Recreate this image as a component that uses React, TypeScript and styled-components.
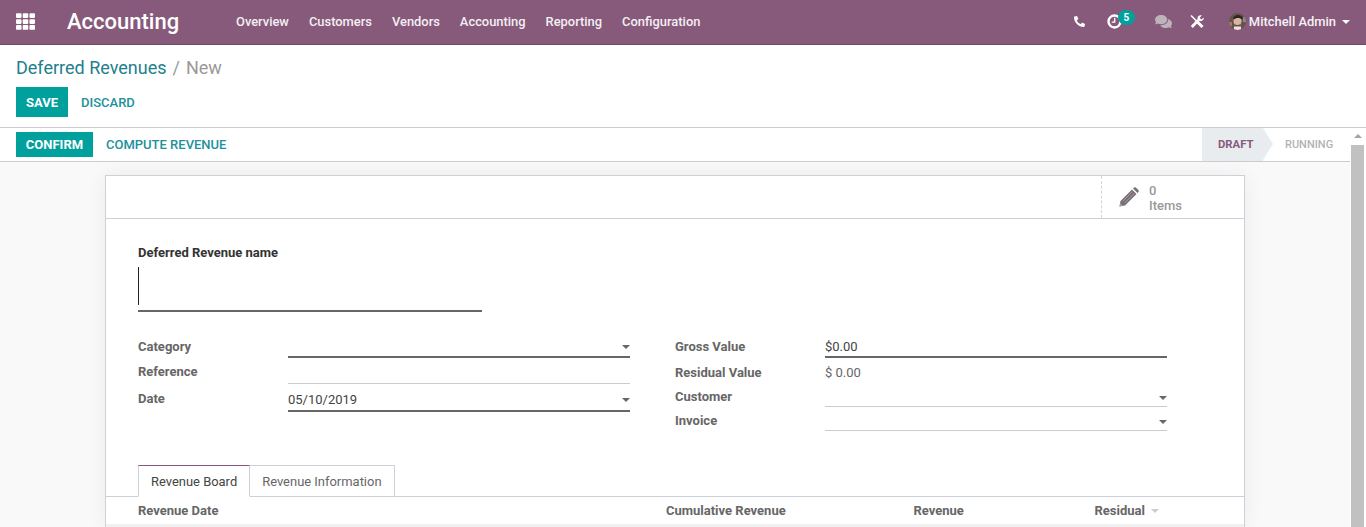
import React from "react";
import styled, { createGlobalStyle } from "styled-components";
import { FaPhone, FaComments, FaTh } from "react-icons/fa";

const GlobalStyle = createGlobalStyle`
  html, body {
    margin: 0;
    height: 100%;
    overflow: hidden;
    font-family: Roboto, "Noto Sans", sans-serif;
    font-size: 13px;
    color: #666;
    background: #fff;
  }
  * { box-sizing: border-box; }
`;

const Page = styled.div`
  display: flex;
  flex-direction: column;
  height: 527px;
  overflow: hidden;
`;

const NavBar = styled.header`
  display: flex;
  align-items: center;
  flex: none;
  height: 45px;
  padding: 0 16px 1px 16px;
  background: #875a7b;
  border-bottom: 1px solid #6f4a66;
  color: #fff;
`;

const Apps = styled.span`
  display: flex;
  font-size: 19px;
  width: 51px;
`;

const Brand = styled.span`
  font-size: 22px;
  font-weight: 500;
  width: 169px;
  white-space: nowrap;
`;

const Menu = styled.nav`
  display: flex;
  gap: 20px;
  font-size: 12.9px;
  font-weight: 500;
  flex: 1;
  color: #f4eef2;
`;

const Systray = styled.div`
  display: flex;
  align-items: center;
`;

const TrayIcon = styled.span<{ $w: number; $muted?: boolean; $inset?: number }>`
  position: relative;
  display: flex;
  width: ${({ $w }) => $w}px;
  padding-left: ${({ $inset = 0 }) => $inset}px;
  color: ${({ $muted }) => ($muted ? "#bdb3ba" : "#fff")};
  font-size: 15px;
`;

const Badge = styled.span`
  position: absolute;
  left: 11px;
  top: -4px;
  width: 17px;
  height: 15px;
  border-radius: 8px;
  background: #00a09d;
  color: #fff;
  font-size: 10px;
  font-weight: 700;
  line-height: 15px;
  text-align: center;
`;

const User = styled.span`
  display: flex;
  align-items: center;
  gap: 3px;
  font-size: 12.93px;
  font-weight: 500;
  color: #f6f1f4;
`;

const Caret = styled.span<{ $color?: string; $size?: number; $lift?: number; $gap?: number }>`
  display: inline-block;
  width: 0;
  height: 0;
  margin-bottom: ${({ $lift = 0 }) => $lift}px;
  margin-left: ${({ $gap = 0 }) => $gap}px;
  border-left: ${({ $size = 4 }) => $size}px solid transparent;
  border-right: ${({ $size = 4 }) => $size}px solid transparent;
  border-top: ${({ $size = 4 }) => $size}px solid ${({ $color = "#666" }) => $color};
`;

const ControlPanel = styled.section`
  flex: none;
  height: 83px;
  padding: 11px 16px 0;
  border-bottom: 1px solid #ccc;
`;

const Breadcrumb = styled.div`
  display: flex;
  gap: 6px;
  height: 31px;
  font-size: 18px;
  line-height: 24px;
  color: #999;
`;

const CrumbLink = styled.span`
  color: #21808c;
`;

const Actions = styled.div`
  display: flex;
  align-items: center;
`;

const Primary = styled.button<{ $h: number; $w: number }>`
  width: ${({ $w }) => $w}px;
  height: ${({ $h }) => $h}px;
  padding: 0;
  border: 0;
  background: #00a09d;
  color: #fff;
  font: 700 13px Roboto, sans-serif;
`;

const Link = styled.button`
  padding: 0 13px;
  border: 0;
  background: none;
  color: #21919c;
  font: 500 13px Roboto, sans-serif;
`;

const Body = styled.div`
  display: flex;
  flex: 1;
  min-height: 0;
`;

const Main = styled.div`
  display: flex;
  flex: 1;
  flex-direction: column;
  min-width: 0;
`;

const StatusBar = styled.div`
  display: flex;
  align-items: center;
  justify-content: space-between;
  flex: none;
  height: 34px;
  padding-left: 16px;
  background: #fff;
  border-bottom: 1px solid #ccc;
`;

const Steps = styled.div`
  display: flex;
  align-items: stretch;
  height: 33px;
`;

const Step = styled.span<{ $active?: boolean }>`
  position: relative;
  z-index: ${({ $active }) => ($active ? 1 : 0)};
  display: flex;
  align-items: center;
  width: ${({ $active }) => ($active ? 61 : 87)}px;
  padding-left: ${({ $active }) => ($active ? 16 : 22)}px;
  background: ${({ $active }) => ($active ? "#e9ecef" : "#fff")};
  color: ${({ $active }) => ($active ? "#875a7b" : "#b3b3b3")};
  font-size: ${({ $active }) => ($active ? 11.3 : 11)}px;
  font-weight: ${({ $active }) => ($active ? 700 : 500)};
  &::after {
    content: "";
    display: ${({ $active }) => ($active ? "block" : "none")};
    position: absolute;
    left: 100%;
    top: 0;
    border-left: 10px solid #e9ecef;
    border-top: 16.5px solid transparent;
    border-bottom: 16.5px solid transparent;
  }
`;

const SheetArea = styled.div`
  flex: 1;
  min-height: 0;
  overflow: hidden;
  padding: 13px 105px 0;
  background: #f9f9f9;
`;

const Sheet = styled.div`
  width: 1140px;
  background: #fff;
  border: 1px solid #ccd1d9;
  border-bottom: 0;
  box-shadow: 0 0 20px rgba(0, 0, 0, 0.06);
`;

const ButtonBox = styled.div`
  display: flex;
  justify-content: flex-end;
  height: 43px;
  border-bottom: 1px solid #ccd1d9;
`;

const StatButton = styled.div`
  display: flex;
  align-items: center;
  width: 143px;
  padding-left: 17px;
  gap: 10px;
  border-left: 1px dashed #d4d4d4;
`;

const StatIcon = styled.span`
  display: flex;
`;

const StatText = styled.div`
  display: flex;
  flex-direction: column;
  color: #999;
  font-size: 13px;
  font-weight: 500;
  line-height: 15px;
  padding-top: 1px;
`;

const FormBody = styled.div`
  padding: 26px 32px 0;
`;

const TitleLabel = styled.div`
  color: #333;
  font-weight: 700;
  font-size: 13px;
  line-height: 16px;
`;

const TitleInput = styled.div`
  width: 344px;
  height: 45px;
  margin-top: 6px;
  padding-bottom: 5px;
  border-bottom: 2px solid #666;
`;

const Cursor = styled.div`
  width: 1px;
  height: 38px;
  background: #222;
`;

const Columns = styled.div`
  display: grid;
  grid-template-columns: 492px 492px;
  column-gap: 45px;
  margin-top: 23px;
`;

const Field = styled.div<{ $h: number }>`
  display: grid;
  grid-template-columns: 150px 342px;
  grid-template-rows: ${({ $h }) => $h}px;
  height: ${({ $h }) => $h}px;
`;

const FieldLabel = styled.label<{ $top?: number }>`
  padding-top: ${({ $top = 0 }) => $top}px;
  font-size: 13px;
  font-weight: 700;
  color: #666;
  line-height: 24px;
`;

const FieldValue = styled.div<{ $line?: "strong" | "thin" | "none"; $muted?: boolean; $pad?: number }>`
  display: flex;
  align-items: flex-end;
  justify-content: space-between;
  height: 100%;
  padding-bottom: ${({ $pad = 3 }) => $pad}px;
  color: ${({ $muted }) => ($muted ? "#666" : "#444")};
  font-size: 13px;
  line-height: 15px;
  border-bottom: ${({ $line = "thin" }) =>
    $line === "strong" ? "2px solid #666" : $line === "thin" ? "1px solid #ccc" : "0"};
`;

const TabRow = styled.div`
  display: flex;
  height: 32px;
  margin: 34px 0 -1px 32px;
`;

const Tab = styled.div<{ $active?: boolean }>`
  position: relative;
  display: flex;
  align-items: center;
  padding: 0 12px;
  border: 1px solid #ccd1d9;
  border-left: ${({ $active }) => ($active ? "1px solid #ccd1d9" : "0")};
  border-top: 1px solid ${({ $active }) => ($active ? "#875a7b" : "#ccd1d9")};
  border-bottom: 1px solid ${({ $active }) => ($active ? "#fff" : "#ccd1d9")};
  color: ${({ $active }) => ($active ? "#444" : "#666")};
  font-size: 12.95px;
`;

const TableHead = styled.div`
  display: grid;
  grid-template-columns: 528px 247.5px 181px 1fr;
  align-items: center;
  height: 31px;
  padding-left: 32px;
  border-top: 1px solid #ccd1d9;
  border-bottom: 3px solid #f0f0f0;
  font-size: 13px;
  font-weight: 700;
  color: #666;
`;

const Sortable = styled.span`
  display: flex;
  align-items: center;
  gap: 6px;
`;

const Scrollbar = styled.div`
  display: flex;
  flex-direction: column;
  align-items: center;
  flex: none;
  width: 16px;
  padding: 6px 2px 0 1px;
  background: #fff;
  gap: 7px;
`;

const ScrollUp = styled.span`
  width: 0;
  height: 0;
  border-left: 4px solid transparent;
  border-right: 4px solid transparent;
  border-bottom: 4px solid #a3a3a3;
`;

const ScrollThumb = styled.div`
  flex: 1;
  width: 100%;
  background: #c1c1c1;
`;

const ClockIcon = () => (
  <svg width="15" height="15" viewBox="0 0 15 15">
    <circle cx="7.5" cy="7.5" r="6" fill="none" stroke="#fff" strokeWidth="2.4" />
    <path d="M7.7 3.8V8.2H4.8" fill="none" stroke="#fff" strokeWidth="1.3" />
  </svg>
);

const ToolsIcon = () => (
  <svg width="14" height="15" viewBox="0 0 14 15" fill="none" stroke="#fff">
    <path d="M1 1.5L7 7.5" strokeWidth="1.6" />
    <path d="M6.5 7L12.5 13" strokeWidth="3" />
    <path d="M1.8 13L8.5 6" strokeWidth="2.8" />
    <path
      d="M13.6 3.4L11.4 5.4 9.6 3.8 11.8 1.4C9.4.6 7 2.4 7.6 5.2L9.4 7C12 7.6 14.2 5.8 13.6 3.4z"
      fill="#fff"
      stroke="none"
    />
  </svg>
);

const PencilIcon = () => (
  <svg width="20" height="20" viewBox="0 0 20 20">
    <path d="M1.5 14L13 2.5 17.5 7 6 18.5 .5 19.5z" fill="#7a6e76" />
    <path d="M14 1.5L15.2.4Q16 0 16.8.4L19.6 3.2Q20 4 19.6 4.8L18.5 6z" fill="#7a6e76" />
    <path d="M3.8 14.2L13.4 4.6M5.6 16L15.2 6.4" stroke="#b3abb0" strokeWidth=".8" />
    <path d="M.5 19.5L1.3 16 4 18.7z" fill="#a59da2" />
  </svg>
);

const Avatar = () => (
  <svg width="17" height="17" viewBox="0 0 17 17">
    <clipPath id="av">
      <circle cx="8.5" cy="8.5" r="8.5" />
    </clipPath>
    <g clipPath="url(#av)">
      <rect width="17" height="17" fill="#66544c" />
      <ellipse cx="8.5" cy="8" rx="4" ry="5" fill="#d8b6a0" />
      <path d="M4 5C6 1 12 1 14 5L13 6.5C11 4.5 7 4.5 5 6.5z" fill="#2e2524" />
      <path d="M6 10.5C7 12.5 10 12.5 11 10.5L10.5 13H6.5z" fill="#6a4a3c" />
      <rect x="5" y="13.5" width="7" height="3.5" fill="#ece6e0" />
      <rect x="0" y="9" width="3" height="4" fill="#a5795f" />
      <rect x="14" y="4" width="3" height="5" fill="#8f8a86" />
    </g>
  </svg>
);

const menuItems = ["Overview", "Customers", "Vendors", "Accounting", "Reporting", "Configuration"];

const App: React.FC = () => {
  return (
    <Page>
      <GlobalStyle />
      <NavBar>
        <Apps>
          <FaTh />
        </Apps>
        <Brand>Accounting</Brand>
        <Menu>
          {menuItems.map((item) => (
            <span key={item}>{item}</span>
          ))}
        </Menu>
        <Systray>
          <TrayIcon $w={34} $inset={1}>
            <FaPhone size={11} style={{ transform: "scaleX(-1)" }} />
          </TrayIcon>
          <TrayIcon $w={48}>
            <ClockIcon />
            <Badge>5</Badge>
          </TrayIcon>
          <TrayIcon $w={35} $muted>
            <FaComments size={17} />
          </TrayIcon>
          <TrayIcon $w={39}>
            <ToolsIcon />
          </TrayIcon>
          <User>
            <Avatar />
            Mitchell Admin
            <Caret $color="#fff" $gap={3} />
          </User>
        </Systray>
      </NavBar>
      <ControlPanel>
        <Breadcrumb>
          <CrumbLink>Deferred Revenues</CrumbLink>
          <span>/</span>
          <span>New</span>
        </Breadcrumb>
        <Actions>
          <Primary $w={52} $h={30}>SAVE</Primary>
          <Link>DISCARD</Link>
        </Actions>
      </ControlPanel>
      <Body>
        <Main>
          <StatusBar>
            <Actions>
              <Primary $w={77} $h={25}>CONFIRM</Primary>
              <Link>COMPUTE REVENUE</Link>
            </Actions>
            <Steps>
              <Step $active>DRAFT</Step>
              <Step>RUNNING</Step>
            </Steps>
          </StatusBar>
          <SheetArea>
            <Sheet>
              <ButtonBox>
                <StatButton>
                  <StatIcon>
                    <PencilIcon />
                  </StatIcon>
                  <StatText>
                    <span>0</span>
                    <span>Items</span>
                  </StatText>
                </StatButton>
              </ButtonBox>
              <FormBody>
                <TitleLabel>Deferred Revenue name</TitleLabel>
                <TitleInput>
                  <Cursor />
                </TitleInput>
                <Columns>
                  <div>
                    <Field $h={23}>
                      <FieldLabel>Category</FieldLabel>
                      <FieldValue $line="strong">
                        <span />
                        <Caret $lift={4} />
                      </FieldValue>
                    </Field>
                    <Field $h={26}>
                      <FieldLabel $top={1.5}>Reference</FieldLabel>
                      <FieldValue />
                    </Field>
                    <Field $h={28}>
                      <FieldLabel $top={2.5}>Date</FieldLabel>
                      <FieldValue $line="strong">
                        <span>05/10/2019</span>
                        <Caret $lift={5} />
                      </FieldValue>
                    </Field>
                  </div>
                  <div>
                    <Field $h={23}>
                      <FieldLabel>Gross Value</FieldLabel>
                      <FieldValue $line="strong" $pad={2}>
                        <span>$0.00</span>
                      </FieldValue>
                    </Field>
                    <Field $h={25}>
                      <FieldLabel $top={2.5}>Residual Value</FieldLabel>
                      <FieldValue $line="none" $muted>
                        <span>$ 0.00</span>
                      </FieldValue>
                    </Field>
                    <Field $h={24}>
                      <FieldLabel $top={2}>Customer</FieldLabel>
                      <FieldValue>
                        <span />
                        <Caret $lift={3.5} />
                      </FieldValue>
                    </Field>
                    <Field $h={24}>
                      <FieldLabel $top={2}>Invoice</FieldLabel>
                      <FieldValue>
                        <span />
                        <Caret $lift={3.5} />
                      </FieldValue>
                    </Field>
                  </div>
                </Columns>
              </FormBody>
              <TabRow>
                <Tab $active>Revenue Board</Tab>
                <Tab>Revenue Information</Tab>
              </TabRow>
              <TableHead>
                <span>Revenue Date</span>
                <span>Cumulative Revenue</span>
                <span>Revenue</span>
                <Sortable>
                  Residual
                  <Caret $color="#ccc" />
                </Sortable>
              </TableHead>
            </Sheet>
          </SheetArea>
        </Main>
        <Scrollbar>
          <ScrollUp />
          <ScrollThumb />
        </Scrollbar>
      </Body>
    </Page>
  );
};

export default App;
